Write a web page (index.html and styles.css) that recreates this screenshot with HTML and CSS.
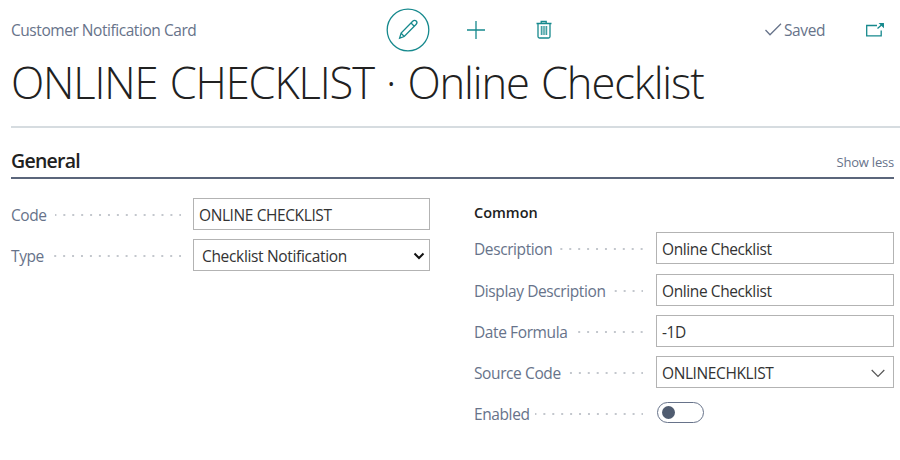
FILE: index.html
```html
<!DOCTYPE html>
<html lang="en">
<head>
<meta charset="utf-8">
<title>Customer Notification Card</title>
<link rel="stylesheet" href="styles.css">
</head>
<body>
<main class="page">
  <header class="topbar">
    <span class="caption">Customer Notification Card</span>
    <div class="actions">
      <span class="edit">
        <svg width="44" height="44" viewBox="0 0 44 44"><circle cx="22" cy="22" r="20.8"/><path d="M13.6 30.2l1.5-5.1L26.7 13.2c1.2-1.2 2.7-1 3.5-.2s1 2.300-.2 3.500L18.200 28.500zM15.100 25.100l3.100 3.400M25 15l3.300 3.300"/></svg>
      </span>
      <svg class="add" width="18" height="18" viewBox="0 0 18 18"><path d="M9 0v18M0 9h18"/></svg>
      <svg class="trash" width="16" height="19" viewBox="0 0 16 19"><path d="M.5 3.500h15M5.200 3.500v-2h5v2M2 3.500v13q0 1.500 1.500 1.500h9q1.500 0 1.500-1.500v-13"/><path class="slats" d="M5.300 6v9M7.100 6v9M8.900 6v9M10.700 6v9"/></svg>
    </div>
    <span class="saved"><svg width="17" height="13" viewBox="0 0 17 13"><path d="M.5 7l4.500 4.700L16 .8"/></svg><span>Saved</span></span>
    <svg class="popout" width="18" height="14" viewBox="0 0 18 14"><path d="M11 2.500H.7v10.300h14.500V7.500M11.500 5.500l4-3.500"/><path class="tip" d="M14 .5h3.300v3.300z"/></svg>
  </header>
  <h1 class="title">ONLINE CHECKLIST · Online Checklist</h1>
  <section class="general">
    <div class="section-head">
      <h2>General</h2>
      <span class="show-less">Show less</span>
    </div>
    <div class="columns">
      <div class="column left">
        <div class="row"><div class="label"><span>Code</span><i class="dots"></i></div><div class="field">ONLINE CHECKLIST</div></div>
        <div class="row"><div class="label"><span>Type</span><i class="dots"></i></div><div class="field select"><span>Checklist Notification</span><svg width="12" height="8" viewBox="0 0 12 8"><path d="M1.500 1.500L6 6l4.500-4.500"/></svg></div></div>
      </div>
      <div class="column right">
        <h3>Common</h3>
        <div class="row"><div class="label"><span>Description</span><i class="dots"></i></div><div class="field">Online Checklist</div></div>
        <div class="row"><div class="label"><span>Display Description</span><i class="dots"></i></div><div class="field">Online Checklist</div></div>
        <div class="row"><div class="label"><span>Date Formula</span><i class="dots"></i></div><div class="field">-1D</div></div>
        <div class="row"><div class="label"><span>Source Code</span><i class="dots"></i></div><div class="field lookup"><span class="code">ONLINECHKLIST</span><svg width="14" height="9" viewBox="0 0 14 9"><path d="M.7 1L7 7.300 13.300 1"/></svg></div></div>
        <div class="row"><div class="label"><span>Enabled</span><i class="dots"></i></div><div class="toggle"><i></i></div></div>
      </div>
    </div>
  </section>
</main>
</body>
</html>
```
FILE: styles.css
```css
* { box-sizing: border-box; }
body {
  margin: 0;
  background: #fff;
  color: #333;
  font: 15.5px/20px "Open Sans", "Noto Sans", sans-serif;
  letter-spacing: -0.4px;
  overflow: hidden;
}
svg { display: block; fill: none; stroke: #16898d; stroke-width: 1.3; flex: none; }
h1, h2, h3 { margin: 0; }
.page { width: 900px; height: 460px; padding-left: 11px; }
.topbar {
  display: grid;
  grid-template-columns: 375px 379px 101px 1fr;
  align-items: center;
  height: 59px;
}
.caption, .saved, .label, .show-less { color: #67738a; }
.caption { letter-spacing: -0.45px; padding-top: 1px; }
.actions { display: flex; align-items: center; }
.add { margin-left: 37px; }
.trash { margin-left: 51px; }
.trash .slats { stroke-width: 1; }
.saved { display: flex; align-items: center; gap: 2px; }
.saved svg { stroke: #67738a; }
.saved span { padding-top: 1px; }
.popout .tip { fill: #16898d; }
.title {
  height: 69px;
  border-bottom: 2px solid #d6dce0;
  color: #212121;
  font-size: 43.5px;
  font-weight: 300;
  line-height: 48px;
  letter-spacing: -1.13px;
  word-spacing: 2px;
  white-space: nowrap;
}
.general { width: 883px; }
.section-head {
  display: flex;
  justify-content: space-between;
  align-items: center;
  height: 51px;
  padding-top: 17px;
  border-bottom: 2px solid #5b667b;
}
.section-head h2 { color: #212121; font-size: 19.5px; font-weight: 600; letter-spacing: -0.75px; }
.show-less { font-size: 13px; letter-spacing: -0.2px; padding-top: 2px; }
.columns { display: grid; grid-template-columns: 419px 420px; gap: 44px; padding-top: 19px; }
.column { display: flex; flex-direction: column; gap: 9.3px; }
.row { display: grid; grid-template-columns: 1fr 237px; height: 32px; align-items: center; }
.right .row { grid-template-columns: 1fr 238px; }
.right { padding-top: 5px; }
h3 { height: 20px; color: #212121; font-size: 14.5px; font-weight: 600; letter-spacing: 0; line-height: 19px; }
.label { display: flex; align-items: center; white-space: nowrap; padding-top: 2px; }
.dots {
  flex: 1;
  height: 2px;
  margin: 0 12px 0 8px;
  background: radial-gradient(circle at 7.9px 1px, #c3c7cd 0.9px, transparent 1.2px) right center / 8.93px 2px repeat-x;
}
.right .dots { margin-right: 13px; margin-left: 5px; }
.field {
  display: flex;
  align-items: center;
  justify-content: space-between;
  height: 32px;
  border: 1px solid #b3b3b3;
  padding: 2px 5px 0;
  white-space: nowrap;
}
.select { padding-left: 8px; padding-right: 4px; letter-spacing: -0.33px; }
.select svg { stroke: #111; stroke-width: 2; }
.lookup { padding-right: 8px; }
.lookup svg { stroke: #555; stroke-width: 1.2; }
.toggle { width: 47px; height: 21px; border: 1px solid #67738a; border-radius: 11px; padding: 3px 4px; margin: -2px 0 0 1px; }
.toggle i { display: block; width: 13px; height: 13px; border-radius: 50%; background: #505c70; }
```
